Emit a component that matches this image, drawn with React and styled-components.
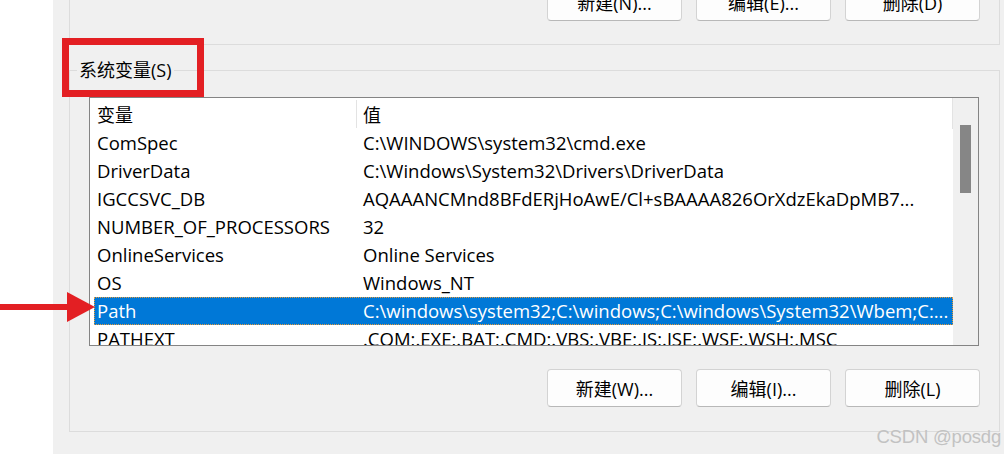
import React from 'react';
import styled, { createGlobalStyle } from 'styled-components';

const Global = createGlobalStyle`
  body {
    margin: 0;
    background: #fff;
    font-family: "Open Sans", "Noto Sans CJK SC", sans-serif;
  }
`;

const Window = styled.div`
  position: relative;
  width: 1004px;
  height: 454px;
  display: flex;
  overflow: hidden;
  background: #fff;
`;

const Gutter = styled.div`
  width: 53px;
  flex: none;
  background: #fff;
`;

const Panel = styled.div`
  flex: 1;
  display: flex;
  flex-direction: column;
  background: #f0f0f0;
  padding: 0 4px 0 16px;
`;

const UserGroup = styled.div`
  box-sizing: border-box;
  height: 45px;
  border: 1px solid #dcdcdc;
  border-top: none;
  display: flex;
  align-items: flex-end;
  justify-content: flex-end;
  padding: 0 19px 23px 0;
`;

const Group = styled.fieldset`
  margin: 15px 0 0;
  padding: 0 19px 24px 19px;
  border: 1px solid #dcdcdc;
  min-width: 0;
`;

const Legend = styled.legend`
  margin-left: -12px;
  padding: 0 2px;
  font-size: 18px;
  line-height: 21px;
  color: #000;
`;

const ListBox = styled.div`
  box-sizing: border-box;
  margin-top: 16px;
  width: 890px;
  height: 249px;
  border: 1px solid #848484;
  background: #fff;
  display: flex;
  overflow: hidden;
`;

const ListBody = styled.div`
  flex: 1;
  min-width: 0;
  display: flex;
  flex-direction: column;
`;

const Header = styled.div`
  height: 31px;
  flex: none;
  display: grid;
  grid-template-columns: 262px 1fr;
  padding-left: 4px;
  border-right: 1px solid #e3e3e3;
  font-size: 18px;
  color: #000;
`;

const HeadCell = styled.div`
  display: flex;
  align-items: center;
  padding-left: ${p => (p.$divided ? '6px' : '3px')};
  border-left: ${p => (p.$divided ? '1px solid #e3e3e3' : 'none')};
  margin: 2px 0 1px;
`;

const Row = styled.div`
  height: 28px;
  flex: none;
  display: grid;
  grid-template-columns: 262px 1fr;
  margin-left: 4px;
  font-size: 18.5px;
  line-height: 28px;
  color: ${p => (p.$selected ? '#fff' : '#000')};
  background: ${p => (p.$selected ? '#0078d7' : 'transparent')};
  outline: ${p => (p.$selected ? '1px dotted #e59a3a' : 'none')};
  outline-offset: -1px;
`;

const Cell = styled.div`
  white-space: nowrap;
  overflow: hidden;
  padding-left: ${p => (p.$value ? '7px' : '3px')};
`;

const ScrollTrack = styled.div`
  width: 25px;
  flex: none;
  background: #f0f0f0;
`;

const Thumb = styled.div`
  width: 11px;
  height: 68px;
  margin: 27px 0 0 7px;
  background: #868686;
`;

const ButtonRow = styled.div`
  display: flex;
  justify-content: flex-end;
  gap: 14px;
  margin-top: ${p => (p.$flush ? '0' : '23px')};
`;

const Button = styled.button`
  box-sizing: border-box;
  width: 135px;
  height: 38px;
  flex: none;
  border: 1px solid #d3d3d3;
  border-bottom-color: #b8b8b8;
  border-radius: 4px;
  background: #fdfdfd;
  font-family: "Open Sans", "Noto Sans CJK SC", sans-serif;
  font-size: 18px;
  color: #000;
  padding: 0;
`;

const Highlight = styled.div`
  position: absolute;
  left: 62px;
  top: 38px;
  width: 142px;
  height: 59px;
  box-sizing: border-box;
  border: 7px solid #e31f23;
`;

const Arrow = styled.svg`
  position: absolute;
  left: 0;
  top: 290px;
`;

const Watermark = styled.div`
  position: absolute;
  right: 3px;
  bottom: 6px;
  font-family: "Liberation Sans Narrow", "Liberation Sans", sans-serif;
  font-size: 18.5px;
  color: #c2c2c2;
  letter-spacing: -0.2px;
`;

const rows = [
  ['ComSpec', 'C:\\WINDOWS\\system32\\cmd.exe'],
  ['DriverData', 'C:\\Windows\\System32\\Drivers\\DriverData'],
  ['IGCCSVC_DB', 'AQAAANCMnd8BFdERjHoAwE/Cl+sBAAAA826OrXdzEkaDpMB7...'],
  ['NUMBER_OF_PROCESSORS', '32'],
  ['OnlineServices', 'Online Services'],
  ['OS', 'Windows_NT'],
  ['Path', 'C:\\windows\\system32;C:\\windows;C:\\windows\\System32\\Wbem;C:...'],
  ['PATHEXT', '.COM;.EXE;.BAT;.CMD;.VBS;.VBE;.JS;.JSE;.WSF;.WSH;.MSC'],
];

export default function App() {
  return (
    <Window>
      <Global />
      <Gutter />
      <Panel>
        <UserGroup>
          <ButtonRow $flush>
            <Button>新建(N)...</Button>
            <Button>编辑(E)...</Button>
            <Button>删除(D)</Button>
          </ButtonRow>
        </UserGroup>
        <Group>
          <Legend>系统变量(S)</Legend>
          <ListBox>
            <ListBody>
              <Header>
                <HeadCell>变量</HeadCell>
                <HeadCell $divided>值</HeadCell>
              </Header>
              {rows.map(([name, value]) => (
                <Row key={name} $selected={name === 'Path'}>
                  <Cell>{name}</Cell>
                  <Cell $value>{value}</Cell>
                </Row>
              ))}
            </ListBody>
            <ScrollTrack>
              <Thumb />
            </ScrollTrack>
          </ListBox>
          <ButtonRow>
            <Button>新建(W)...</Button>
            <Button>编辑(I)...</Button>
            <Button>删除(L)</Button>
          </ButtonRow>
        </Group>
      </Panel>
      <Highlight />
      <Arrow width="96" height="34" viewBox="0 0 96 34">
        <rect x="0" y="14" width="70" height="6" fill="#e31f23" />
        <polygon points="67,2 95,17 67,32" fill="#e31f23" />
      </Arrow>
      <Watermark>CSDN @posdg</Watermark>
    </Window>
  );
}
